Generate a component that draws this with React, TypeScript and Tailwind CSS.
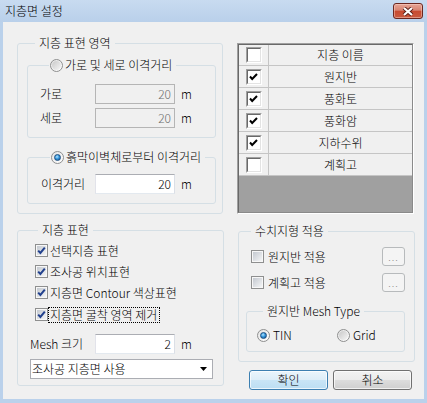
import React from "react";

function Check7({ checked }: { checked?: boolean }) {
  return (
    <span className="relative flex h-[13px] w-[13px] shrink-0 items-center justify-center border border-[#8e8f8f] bg-[#f7f7f7]">
      <span className="h-[9px] w-[9px] bg-linear-to-br from-[#c4c9d0] to-[#f4f5f6]" />
      {checked && (
        <svg className="absolute left-[1px] top-[1px]" width="9" height="9" viewBox="0 0 9 9">
          <path d="M1.2 4.6 L3.4 7 L7.8 1.6" stroke="#22418e" strokeWidth="2" fill="none" />
        </svg>
      )}
    </span>
  );
}

function Radio7({ checked }: { checked?: boolean }) {
  return (
    <span className="flex h-[13px] w-[13px] shrink-0 items-center justify-center rounded-full border border-[#8e8f8f] bg-linear-to-br from-[#e4e4e4] to-[#ffffff]">
      {checked ? (
        <span className="h-[7px] w-[7px] rounded-full border border-[#1c4f82] bg-[radial-gradient(circle_at_40%_35%,#b5e6ff_0%,#3597dd_45%,#0d4d8c_100%)]" />
      ) : (
        <span className="h-[9px] w-[9px] rounded-full bg-linear-to-br from-[#c9c9c9] to-[#f6f6f6]" />
      )}
    </span>
  );
}

function ListCheck({ checked }: { checked?: boolean }) {
  return (
    <span className="flex h-[16px] w-[16px] shrink-0 border border-[#a0a0a0] border-b-white border-r-white">
      <span className="flex h-full w-full items-center justify-center border border-[#696969] border-b-[#e3e3e3] border-r-[#e3e3e3] bg-white">
        {checked && (
          <svg width="9" height="8" viewBox="0 0 9 8">
            <path d="M1 3.5 L3.2 6 L8 1" stroke="#000" strokeWidth="2" fill="none" />
          </svg>
        )}
      </span>
    </span>
  );
}

function TextBox({ value, disabled }: { value: string; disabled?: boolean }) {
  return (
    <div
      className={
        disabled
          ? "flex h-[20px] w-[80px] shrink-0 items-center justify-end border border-[#b5b5b5] bg-[#f0f0f0] pr-[3px] text-[#6d6d6d]"
          : "flex h-[20px] w-[80px] shrink-0 items-center justify-end border border-[#abadb3] border-b-[#e3e9ef] border-l-[#e2e3ea] border-r-[#dbdfe6] bg-white pr-[3px] text-black"
      }
    >
      {value}
    </div>
  );
}

function Legend({ children, className }: { children: React.ReactNode; className: string }) {
  return (
    <legend className={className}>
      <span className="flex h-[14px] items-center whitespace-nowrap">{children}</span>
    </legend>
  );
}

export default function App() {
  return (
    <div className="flex h-[403px] w-[427px] flex-col bg-[#bad1eb] font-['Noto_Sans_CJK_KR','Noto_Sans',sans-serif] text-[12px] font-light leading-[14px] text-black">
      {/* Title bar */}
      <div className="flex h-[22px] shrink-0 justify-between bg-linear-to-b from-[#c8dbf0] to-[#b9d0ea] pl-[5px] pr-[4px]">
        <span className="self-center">지층면 설정</span>
        <div className="mt-[3px] flex h-[16px] w-[30px] items-center justify-center rounded-[3px] border border-[#6b2720] bg-[linear-gradient(#e7a596,#d78472_45%,#c84a30_50%,#c95a40)] shadow-[inset_0_0_0_1px_rgba(255,220,210,0.45)]">
          <svg width="12" height="9" viewBox="0 0 12 9">
            <path d="M2 1 L10 8 M10 1 L2 8" stroke="#5b1f17" strokeWidth="4" />
            <path d="M2 1 L10 8 M10 1 L2 8" stroke="#fff" strokeWidth="2.2" />
          </svg>
        </div>
      </div>

      {/* Client area */}
      <div className="mx-[3px] mb-[4px] flex flex-1 gap-[14px] bg-[#f0f0f0] pl-[14px]">
        {/* Left column */}
        <div className="flex w-[206px] flex-col">
          <fieldset className="mt-[14px] rounded-[3px] border border-[#d5dfe5] pb-[9px] pl-[9px] pr-[6px] pt-[8px]">
            <Legend className="ml-[8px] px-[4px]">지층 표현 영역</Legend>
            <fieldset className="rounded-[3px] border border-[#d5dfe5] pb-[9px] pl-[12px] pt-[12px]">
              <Legend className="ml-[9px] pl-[1px] pr-[4px]">
                <span className="flex items-center gap-[2px]">
                  <Radio7 />
                  <span>가로 및 세로 이격거리</span>
                </span>
              </Legend>
              <div className="flex h-[20px] items-center">
                <span className="w-[55px]">가로</span>
                <TextBox value="20" disabled />
                <span className="ml-[6px]">m</span>
              </div>
              <div className="mt-[4px] flex h-[20px] items-center">
                <span className="w-[55px]">세로</span>
                <TextBox value="20" disabled />
                <span className="ml-[6px]">m</span>
              </div>
            </fieldset>
            <fieldset className="mt-[12px] rounded-[3px] border border-[#d5dfe5] pb-[9px] pl-[13px] pt-[10px]">
              <Legend className="ml-[9px] pl-[1px] pr-[4px]">
                <span className="flex items-center gap-[2px]">
                  <Radio7 checked />
                  <span>흙막이벽체로부터 이격거리</span>
                </span>
              </Legend>
              <div className="flex h-[20px] items-center">
                <span className="w-[54px]">이격거리</span>
                <TextBox value="20" />
                <span className="ml-[6px]">m</span>
              </div>
            </fieldset>
          </fieldset>

          <fieldset className="mt-[9px] rounded-[3px] border border-[#d5dfe5] pb-[6px] pl-[12px] pr-[10px] pt-[3px]">
            <Legend className="ml-[8px] px-[4px]">지층 표현</Legend>
            {["선택지층 표현", "조사공 위치표현", "지층면 Contour 색상표현"].map((t) => (
              <div key={t} className="flex h-[21px] items-center pl-[5px]">
                <Check7 checked />
                <span className="border border-transparent pl-[1px] pr-[1px]">{t}</span>
              </div>
            ))}
            <div className="mt-[1px] flex h-[21px] items-center pl-[5px]">
              <Check7 checked />
              <span className="border border-dotted border-black pl-[1px] pr-[2px]">지층면 굴착 영역 제거</span>
            </div>
            <div className="mt-[9px] flex h-[20px] items-center">
              <span className="w-[65px]">Mesh 크기</span>
              <TextBox value="2" />
              <span className="ml-[6px]">m</span>
            </div>
            <div className="mt-[5px] flex h-[20px] w-[183px] items-center justify-between border border-[#abadb3] bg-white pl-[1px] pr-[5px]">
              <span>조사공 지층면 사용</span>
              <svg width="7" height="4" viewBox="0 0 7 4">
                <path d="M0 0 H7 L3.5 4 Z" fill="#000" />
              </svg>
            </div>
          </fieldset>
        </div>

        {/* Right column */}
        <div className="flex w-[178px] flex-col">
          <div className="mt-[21px] h-[171px] w-[177px] border border-[#a0a0a0] border-b-white border-r-white">
            <div className="flex h-full flex-col border border-[#696969] border-b-[#8a8a8a] border-r-[#8a8a8a] bg-[#a0a0a0]">
              {[
                { n: "지층 이름", c: false, h: "h-[21px]" },
                { n: "원지반", c: true, h: "h-[22px]" },
                { n: "풍화토", c: true, h: "h-[22px]" },
                { n: "풍화암", c: true, h: "h-[22px]" },
                { n: "지하수위", c: true, h: "h-[22px]" },
                { n: "계획고", c: false, h: "h-[22px]" },
              ].map((r) => (
                <div key={r.n} className={`flex ${r.h} shrink-0 border-b border-[#c5c5c5] bg-[#f0f0f0]`}>
                  <div className="flex w-[30px] items-center justify-center border-r border-[#c5c5c5]">
                    <ListCheck checked={r.c} />
                  </div>
                  <div className="flex flex-1 items-center justify-center">{r.n}</div>
                </div>
              ))}
            </div>
          </div>

          <fieldset className="ml-[1px] mt-[10px] w-[177px] rounded-[3px] border border-[#d5dfe5] pb-[9px] pl-[7px] pr-[9px] pt-[9px]">
            <Legend className="ml-[5px] px-[4px]">수치지형 적용</Legend>
            {["원지반 적용", "계획고 적용"].map((t, i) => (
              <div key={t} className={`flex h-[19px] items-center justify-between pl-[5px] ${i === 1 ? "mt-[7px]" : ""}`}>
                <div className="flex items-center gap-[4px]">
                  <Check7 />
                  <span>{t}</span>
                </div>
                <div className="flex h-[19px] w-[23px] items-end justify-center rounded-[3px] border border-[#b7babc] bg-[#f4f4f4] pb-[3px] text-[10px] leading-[10px] tracking-[1px] text-[#8a8a8a]">
                  ...
                </div>
              </div>
            ))}
            <fieldset className="mt-[12px] rounded-[3px] border border-[#d5dfe5] pb-[9px] pl-[10px] pt-[10px]">
              <Legend className="ml-[6px] px-[4px]">원지반 Mesh Type</Legend>
              <div className="flex h-[14px] items-center">
                <div className="flex w-[80px] items-center gap-[3px]">
                  <Radio7 checked />
                  <span>TIN</span>
                </div>
                <div className="flex items-center gap-[3px]">
                  <Radio7 />
                  <span>Grid</span>
                </div>
              </div>
            </fieldset>
          </fieldset>

          <div className="mt-[8px] flex gap-[5px] pl-[12px]">
            <div className="flex h-[20px] w-[79px] items-center justify-center rounded-[3px] border border-[#3c7fb1] bg-[linear-gradient(#eaf5fc,#dcedf8_50%,#c9e5f6_50%,#bcdef3)] shadow-[inset_0_0_0_1px_rgba(255,255,255,0.7)]">
              확인
            </div>
            <div className="flex h-[20px] w-[79px] items-center justify-center rounded-[3px] border border-[#707070] bg-[linear-gradient(#f2f2f2,#ebebeb_50%,#dddddd_50%,#cfcfcf)] shadow-[inset_0_0_0_1px_rgba(255,255,255,0.7)]">
              취소
            </div>
          </div>
        </div>
      </div>
    </div>
  );
}
